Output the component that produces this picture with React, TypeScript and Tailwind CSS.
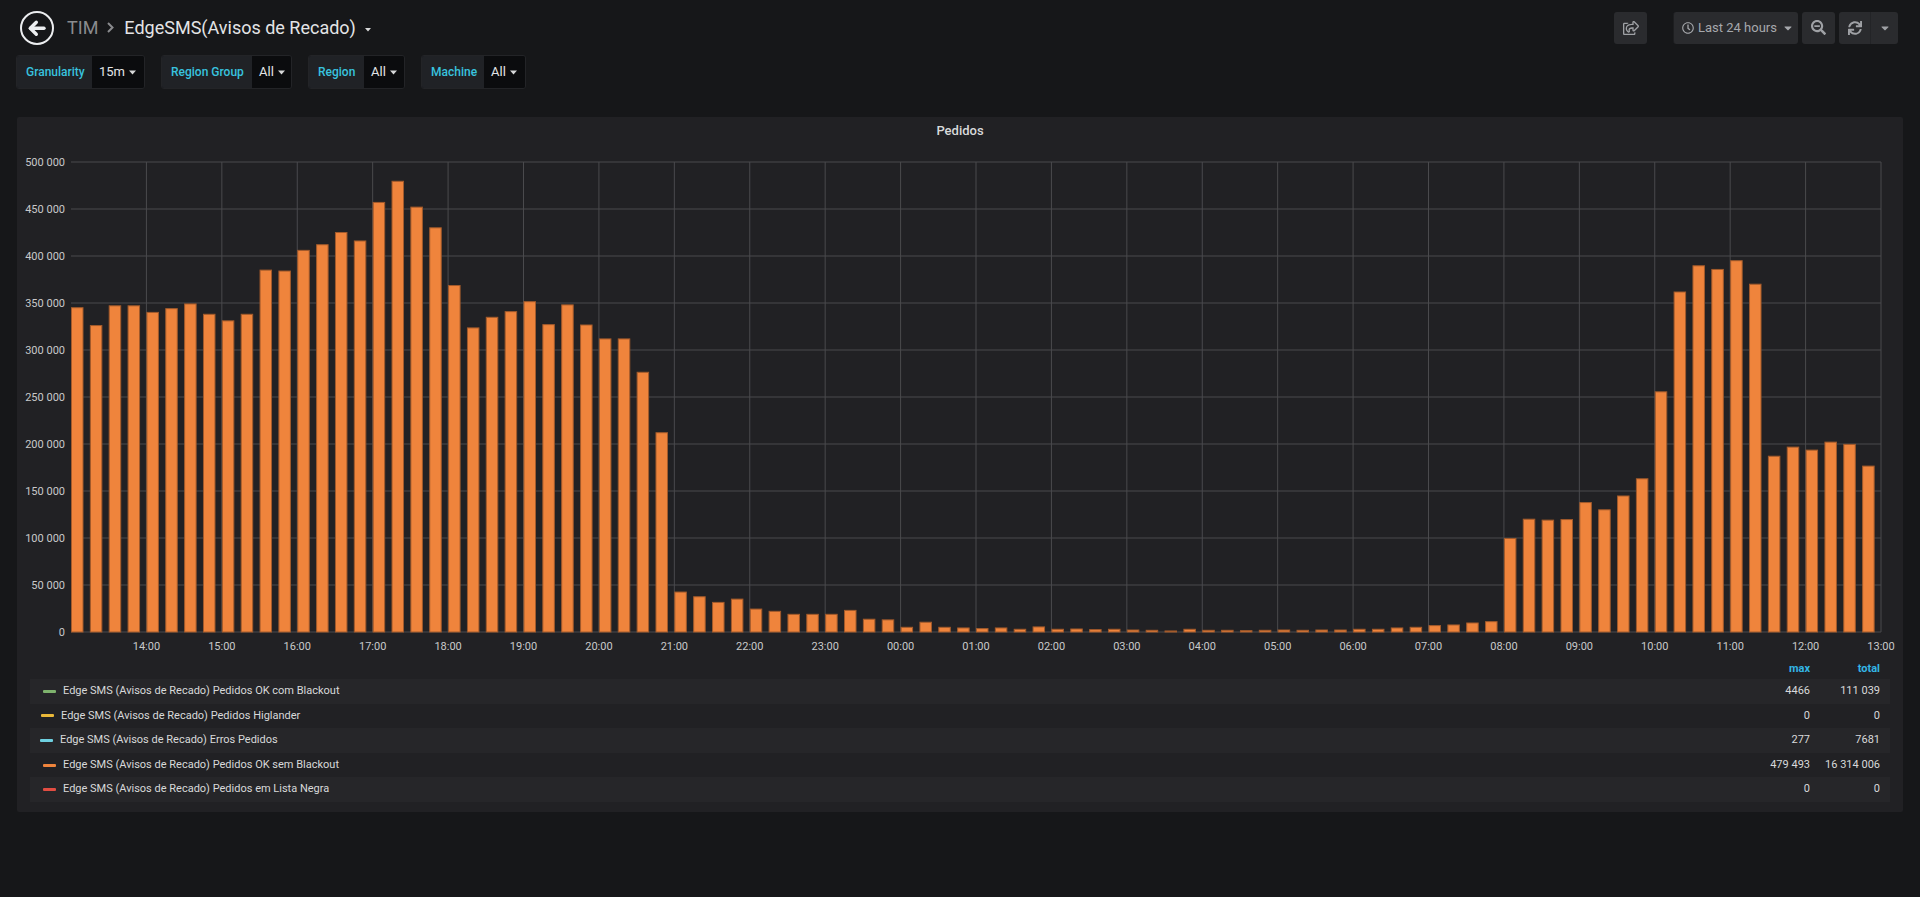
import { FaRegShareSquare, FaSearchMinus, FaSync, FaCaretDown, FaRegClock } from 'react-icons/fa';

// 15m buckets, thousands of requests, 13:00 -> 13:00
const bars = [
  345, 326, 347, 347, 340, 344, 349, 338, 331, 338, 385, 384,
  406, 412, 425, 416, 457, 479.5, 452, 430, 368.6, 323.5, 334.8, 340.8,
  351.4, 327, 348, 326.6, 311.8, 311.8, 276.3, 212, 42.5, 37.5, 31.5, 35,
  24.4, 22, 18.8, 18.8, 18.8, 23, 13.6, 12.9, 5, 10.4, 5, 4.3,
  3.6, 4.3, 2.9, 5.4, 2.9, 3.2, 2.5, 2.9, 2.1, 1.8, 1.1, 2.9,
  1.8, 1.8, 1.4, 1.8, 2.1, 1.8, 2.1, 2.1, 2.9, 2.9, 4.3, 5,
  6.8, 7.5, 9.6, 11, 99.5, 120, 119, 119.6, 137.7, 130, 144.7, 163,
  255.5, 361.7, 389.6, 385.7, 395, 370, 187, 196.7, 193.5, 202, 199.6, 176.5,
];

const hours = ['14:00', '15:00', '16:00', '17:00', '18:00', '19:00', '20:00', '21:00', '22:00', '23:00', '00:00', '01:00',
  '02:00', '03:00', '04:00', '05:00', '06:00', '07:00', '08:00', '09:00', '10:00', '11:00', '12:00', '13:00'];

const series = [
  { name: 'Edge SMS (Avisos de Recado) Pedidos OK com Blackout', color: 'bg-[#7eb26d]', pad: 'pl-[13px]', max: '4466', total: '111 039' },
  { name: 'Edge SMS (Avisos de Recado) Pedidos Higlander', color: 'bg-[#eab839]', pad: 'pl-[11px]', max: '0', total: '0' },
  { name: 'Edge SMS (Avisos de Recado) Erros Pedidos', color: 'bg-[#6ed0e0]', pad: 'pl-[10px]', max: '277', total: '7681' },
  { name: 'Edge SMS (Avisos de Recado) Pedidos OK sem Blackout', color: 'bg-[#ef843c]', pad: 'pl-[13px]', max: '479 493', total: '16 314 006' },
  { name: 'Edge SMS (Avisos de Recado) Pedidos em Lista Negra', color: 'bg-[#e24d42]', pad: 'pl-[13px]', max: '0', total: '0' },
];

const variables = [
  { label: 'Granularity', value: '15m', lw: 'w-[75px]', vw: 'w-[52px]' },
  { label: 'Region Group', value: 'All', lw: 'w-[90px]', vw: 'w-[39px]' },
  { label: 'Region', value: 'All', lw: 'w-[55px]', vw: 'w-[40px]' },
  { label: 'Machine', value: 'All', lw: 'w-[62px]', vw: 'w-[41px]' },
];

const W = 1886;
const H = 514;
const X0 = 54;
const X1 = 1864;
const YTOP = 19;
const YZERO = 489;
const pitch = (X1 - X0) / 96;
const yOf = (k: number) => YZERO - (k / 500) * (YZERO - YTOP);

function Caret({ className = 'fill-[#d8d9da]' }: { className?: string }) {
  return (
    <svg width="7" height="5" viewBox="0 0 7 5" className={className}>
      <polygon points="0,0.5 7,0.5 3.5,4.5" />
    </svg>
  );
}

function VarPicker({ label, value, lw, vw }: { label: string; value: string; lw: string; vw: string }) {
  return (
    <div className="flex h-[34px] rounded-[3px] border border-[#232427] overflow-hidden">
      <div className={`flex shrink-0 items-center pl-[9px] ${lw} bg-[#202226] text-[12px] font-medium text-[#38c3df]`}>{label}</div>
      <div className={`flex shrink-0 items-center gap-[4px] pl-[7px] ${vw} bg-[#0b0c0e] text-[13px] text-[#e3e4e6]`}>
        {value}
        <Caret />
      </div>
    </div>
  );
}

function Chart() {
  const ticks = [0, 50, 100, 150, 200, 250, 300, 350, 400, 450, 500];
  return (
    <svg width={W} height={H} viewBox={`0 0 ${W} ${H}`} className="block">
      {ticks.map(t => (
        <g key={t}>
          <line x1={X0} x2={X1} y1={yOf(t)} y2={yOf(t)} stroke="#4a4a4d" strokeWidth="1" />
          <text x={48} y={yOf(t) + 4} textAnchor="end" fontSize="11" fill="#c8c9ca">
            {t === 0 ? '0' : `${t} 000`}
          </text>
        </g>
      ))}
      {hours.map((h, i) => {
        const x = X0 + (i + 1) * pitch * 4;
        return (
          <g key={h}>
            <line x1={x} x2={x} y1={YTOP} y2={YZERO} stroke="#4a4a4d" strokeWidth="1" />
            <text x={x} y={507} textAnchor="middle" fontSize="11" fill="#c8c9ca">{h}</text>
          </g>
        );
      })}
      {bars.map((v, i) => {
        const y = yOf(v);
        return (
          <rect
            key={i}
            x={X0 + i * pitch + 0.5}
            y={y}
            width={11.5}
            height={YZERO - y}
            fill="#ef843c"
            stroke="#a25a2b"
            strokeWidth="1"
          />
        );
      })}
    </svg>
  );
}

export default function App() {
  return (
    <div className="min-h-screen w-full bg-[#161719] font-[family-name:Roboto,sans-serif] text-[#d8d9da]">
      {/* Navbar */}
      <div className="flex h-[55px] items-center pl-[20px] pr-[22px]">
        <svg width="34" height="34" viewBox="0 0 34 34" fill="none" stroke="#eceef0" strokeLinecap="round" strokeLinejoin="round">
          <circle cx="17" cy="17" r="16" strokeWidth="2" />
          <line x1="10.5" y1="17.3" x2="24" y2="17.3" strokeWidth="3.4" />
          <polyline points="16.3,11.3 10.3,17.3 16.3,23.3" strokeWidth="3.4" />
        </svg>
        <span className="ml-[13px] text-[18px] text-[#8a8b8e]">TIM</span>
        <svg width="7" height="11" viewBox="0 0 7 11" className="ml-[9px]" fill="none" stroke="#8a8b8e" strokeWidth="2">
          <polyline points="1,1 5.5,5.5 1,10" />
        </svg>
        <span className="ml-[10px] text-[18px] text-[#e3e4e6]">EdgeSMS(Avisos de Recado)</span>
        <span className="ml-[9px] mt-[4px]">
          <svg width="6" height="4" viewBox="0 0 6 4" className="fill-[#d8d9da]"><polygon points="0,0 6,0 3,3.5" /></svg>
        </span>

        <div className="ml-auto flex items-center">
          <button className="flex h-[32px] w-[33px] items-center justify-center rounded-[3px] bg-[#2a2b2e] text-[#9fa1a5]">
            <FaRegShareSquare size={16} />
          </button>
          <button className="ml-[26px] flex h-[32px] w-[125px] items-center gap-[4px] rounded-[3px] border-l border-[#1d1e20] bg-[#2a2b2e] pl-[8px] text-[13px] text-[#a6a8ac]">
            <FaRegClock size={12} />
            <span>Last 24 hours</span>
            <FaCaretDown size={12} className="ml-[1px]" />
          </button>
          <button className="ml-[4px] flex h-[32px] w-[33px] items-center justify-center rounded-[3px] bg-[#2a2b2e] text-[#9fa1a5]">
            <FaSearchMinus size={15} />
          </button>
          <div className="ml-[4px] flex h-[32px] overflow-hidden rounded-[3px] bg-[#2a2b2e] text-[#9fa1a5]">
            <button className="flex w-[31px] items-center justify-center">
              <FaSync size={14} />
            </button>
            <button className="flex w-[28px] items-center justify-center border-l border-[#232427]">
              <FaCaretDown size={12} />
            </button>
          </div>
        </div>
      </div>

      {/* Template variables */}
      <div className="flex gap-4 pl-[16px]">
        {variables.map(v => (
          <VarPicker key={v.label} {...v} />
        ))}
      </div>

      {/* Panel */}
      <div className="px-[17px] pt-[28px]">
        <div className="rounded-[2px] bg-[#212124] pb-[10px]">
          <div className="h-[26px] text-center text-[13px] font-medium leading-[28px] text-[#d8d9da]">Pedidos</div>
          <Chart />
          <div className="px-[13px] text-[11px]">
            <div className="grid h-[22px] grid-cols-[1fr_80px_80px] items-center pt-[3px] font-bold text-[#33b5e5]">
              <span />
              <span className="text-right">max</span>
              <span className="pr-[10px] text-right">total</span>
            </div>
            {series.map((s, i) => (
              <div
                key={s.name}
                className={`grid h-[24.6px] grid-cols-[1fr_80px_80px] items-center ${i % 2 === 0 ? 'bg-[#262629]' : ''}`}
              >
                <div className={`flex items-center ${s.pad}`}>
                  <span className={`h-[3px] w-[13px] rounded-[1px] ${s.color}`} />
                  <span className="ml-[7px] text-[#d8d9da]">{s.name}</span>
                </div>
                <span className="text-right text-[#d8d9da]">{s.max}</span>
                <span className="pr-[10px] text-right text-[#d8d9da]">{s.total}</span>
              </div>
            ))}
          </div>
        </div>
      </div>
    </div>
  );
}
